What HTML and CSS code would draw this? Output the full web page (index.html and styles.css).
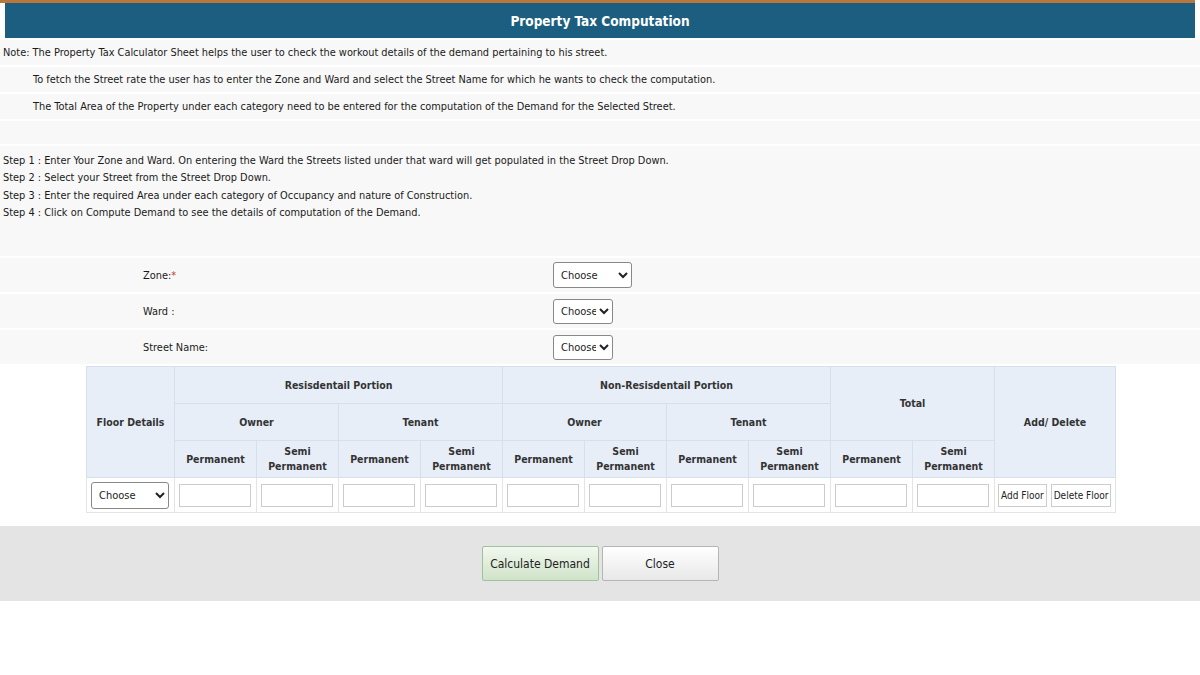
FILE: index.html
```html
<!DOCTYPE html>
<html lang="en">

<head>
    <meta charset="UTF-8">
    <title>Property Tax Computation</title>
    <link rel="stylesheet" href="styles.css">
</head>

<body>
    <header class="head">
        <h1>Property Tax Computation</h1>
    </header>
    <div class="rows">
        <div class="row note">Note: The Property Tax Calculator Sheet helps the user to check the workout details of the demand pertaining to his street.</div>
        <div class="row note indent">To fetch the Street rate the user has to enter the Zone and Ward and select the Street Name for which he wants to check the computation.</div>
        <div class="row note indent">The Total Area of the Property under each category need to be entered for the computation of the Demand for the Selected Street.</div>
        <div class="row blank"></div>
        <div class="row steps">
            Step 1 : Enter Your Zone and Ward. On entering the Ward the Streets listed under that ward will get populated in the Street Drop Down.<br>
            Step 2 : Select your Street from the Street Drop Down.<br>
            Step 3 : Enter the required Area under each category of Occupancy and nature of Construction.<br>
            Step 4 : Click on Compute Demand to see the details of computation of the Demand.
        </div>
        <div class="row field">
            <label>Zone:<span class="req">*</span></label>
            <select class="sel wide"><option>Choose</option></select>
        </div>
        <div class="row field">
            <label>Ward :</label>
            <select class="sel"><option>Choose</option></select>
        </div>
        <div class="row field">
            <label>Street Name:</label>
            <select class="sel"><option>Choose</option></select>
        </div>
    </div>
    <table class="floors">
        <colgroup>
            <col class="c-floor">
            <col span="10" class="c-num">
            <col class="c-act">
        </colgroup>
        <thead>
            <tr>
                <th rowspan="3">Floor Details</th>
                <th colspan="4">Resisdentail Portion</th>
                <th colspan="4">Non-Resisdentail Portion</th>
                <th colspan="2" rowspan="2">Total</th>
                <th rowspan="3">Add/ Delete</th>
            </tr>
            <tr>
                <th colspan="2">Owner</th>
                <th colspan="2">Tenant</th>
                <th colspan="2">Owner</th>
                <th colspan="2">Tenant</th>
            </tr>
            <tr>
                <th>Permanent</th><th>Semi<br>Permanent</th>
                <th>Permanent</th><th>Semi<br>Permanent</th>
                <th>Permanent</th><th>Semi<br>Permanent</th>
                <th>Permanent</th><th>Semi<br>Permanent</th>
                <th>Permanent</th><th>Semi<br>Permanent</th>
            </tr>
        </thead>
        <tbody>
            <tr>
                <td><select class="sel floor"><option>Choose</option></select></td>
                <td><input type="text"></td><td><input type="text"></td>
                <td><input type="text"></td><td><input type="text"></td>
                <td><input type="text"></td><td><input type="text"></td>
                <td><input type="text"></td><td><input type="text"></td>
                <td><input type="text"></td><td><input type="text"></td>
                <td class="acts"><button type="button" class="small">Add Floor</button><button type="button" class="small">Delete Floor</button></td>
            </tr>
        </tbody>
    </table>
    <div class="bottom">
        <button type="button" class="btn go">Calculate Demand</button><button type="button" class="btn">Close</button>
    </div>
</body>

</html>
```

FILE: styles.css
```css
* {
    box-sizing: border-box;
}

body {
    margin: 0;
    background: #fff;
    color: #1a1a1a;
    font-family: "DejaVu Sans Condensed", "Liberation Sans", sans-serif;
    font-size: 10.9px;
}

.head {
    margin-right: 5px;
    border-top: 3px solid #b9773b;
}

h1 {
    margin: 0 0 0 5px;
    height: 35px;
    line-height: 36px;
    text-align: center;
    background-color: #1b5e80;
    color: #fff;
    font-size: 13.5px;
}

.rows {
    display: flex;
    flex-direction: column;
    gap: 2px;
    margin-top: 2px;
}

.row {
    background-color: #f8f8f8;
}

.note {
    height: 25px;
    line-height: 26px;
    padding-left: 3px;
}

.indent {
    padding-left: 33px;
}

.blank {
    height: 23px;
}

.steps {
    height: 110px;
    padding: 6px 3px 0;
    line-height: 17.4px;
}

.field {
    display: flex;
    align-items: center;
    height: 34px;
    padding-left: 143px;
}

.field label {
    width: 410px;
}

.req {
    color: #c0392b;
}

.sel {
    height: 25px;
    width: 60px;
    padding: 0 0 0 3px;
    border: 1px solid #888;
    border-radius: 3px;
    background: #fff;
    font-family: "DejaVu Sans Condensed", sans-serif;
    font-size: 11px;
    color: #222;
}

.wide {
    width: 79px;
    height: 26px;
}

.floors {
    margin: 2px 0 0 86px;
    width: 1029px;
    table-layout: fixed;
    border-collapse: collapse;
}

.c-floor {
    width: 88px;
}

.c-num {
    width: 82px;
}

.c-act {
    width: 121px;
}

.floors th {
    height: 37px;
    padding: 0;
    background-color: #e7eef8;
    border: 1px solid #d6e0ec;
    color: #333;
    font-size: 10.5px;
    font-weight: bold;
    line-height: 15px;
}

.floors td {
    height: 35px;
    padding: 0 4px;
    border: 1px solid #e4e4e4;
    background: #fff;
}

.floors input {
    width: 72px;
    height: 23px;
    border: 1px solid #ccc;
}

.floor {
    width: 78px;
    height: 27px;
}

.acts {
    white-space: nowrap;
}

.floors td.acts {
    padding: 0 3px;
}

.small {
    height: 23px;
    padding: 0 2px;
    margin-right: 4px;
    border: 1px solid #ccc;
    background: #fff;
    font-family: "DejaVu Sans Condensed", sans-serif;
    font-size: 10px;
    color: #222;
}

.small:last-child {
    margin-right: 0;
}

.bottom {
    display: flex;
    justify-content: center;
    gap: 3px;
    margin-top: 13px;
    padding: 20px 0;
    background-color: #e4e4e4;
}

.btn {
    width: 117px;
    height: 35px;
    border: 1px solid #b5b5b5;
    border-radius: 2px;
    background: linear-gradient(#fff, #e8e8e8);
    font-family: "DejaVu Sans Condensed", sans-serif;
    font-size: 12px;
    white-space: nowrap;
    color: #222;
}

.go {
    border-color: #9fc29b;
    background: linear-gradient(#f2f8ef, #cfe3c9);
}
```
